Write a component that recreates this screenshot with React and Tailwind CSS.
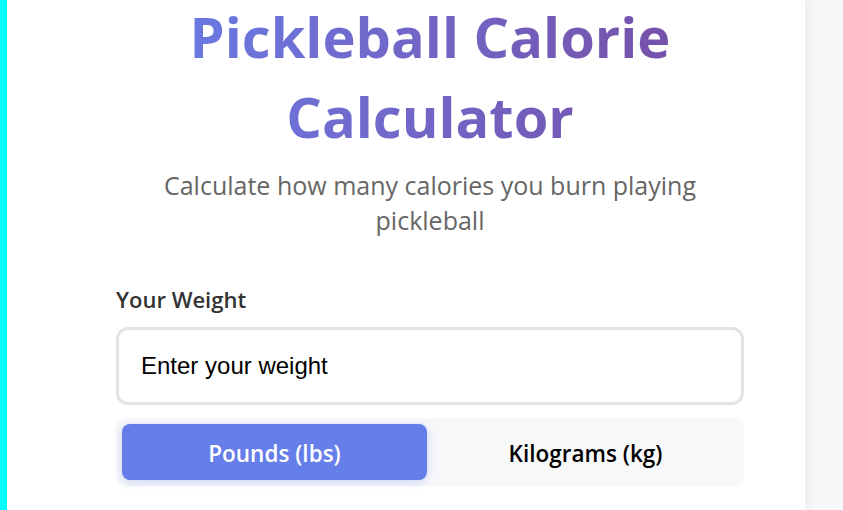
import React from "react";

export default function App() {
  return (
    <div className="flex h-[510px] w-[843px] overflow-hidden bg-[#f7f7f7]">
      <div className="w-[7px] shrink-0 bg-[#00ffff]" />
      <div className="relative w-[798px] shrink-0 bg-white shadow-[2px_0_12px_rgba(0,0,0,0.06)]">
        <div className="ml-[109px] w-[628px]">
          <h1
            className="-mt-[4px] bg-gradient-to-r from-[#667eea] to-[#764ba2] bg-clip-text text-center text-[56px] font-bold leading-[80px] text-transparent"
            style={{ fontFamily: '"Open Sans", sans-serif' }}
          >
            Pickleball Calorie Calculator
          </h1>
          <p
            className="mx-auto mt-[12px] w-[580px] text-center text-[25px] leading-[35px] text-[#666]"
            style={{ fontFamily: '"Open Sans", sans-serif' }}
          >
            Calculate how many calories you burn playing pickleball
          </p>
          <div className="mt-[47px]">
            <label
              className="block text-[22px] font-semibold leading-[28px] text-[#333]"
              style={{ fontFamily: '"Open Sans", sans-serif' }}
            >
              Your Weight
            </label>
            <div className="mt-[14px] flex h-[78px] items-center rounded-[12px] border-[3px] border-[#e2e4e9] bg-white pl-[22px]">
              <span
                className="text-[24px] text-black"
                style={{ fontFamily: '"Liberation Sans", Arial, sans-serif' }}
              >
                Enter your weight
              </span>
            </div>
            <div className="mt-[13px] flex h-[68px] gap-[6px] rounded-[10px] bg-[#f7f8fa] p-[6px]">
              <div
                className="flex flex-1 items-center justify-center rounded-[8px] bg-[#667eea] pt-[3px] text-[22.5px] font-semibold text-white shadow-[0_2px_8px_rgba(102,126,234,0.3)]"
                style={{ fontFamily: '"Open Sans", sans-serif' }}
              >
                Pounds (lbs)
              </div>
              <div
                className="flex flex-1 items-center justify-center rounded-[8px] pt-[3px] text-[22.5px] font-semibold text-black"
                style={{ fontFamily: '"Open Sans", sans-serif' }}
              >
                Kilograms (kg)
              </div>
            </div>
          </div>
        </div>
      </div>
    </div>
  );
}
